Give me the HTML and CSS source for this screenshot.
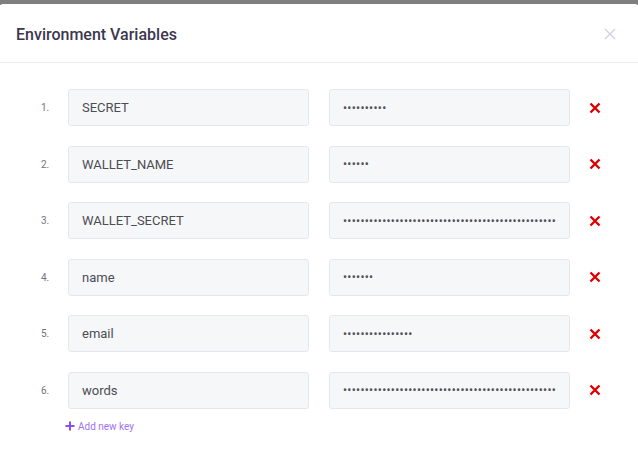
FILE: index.html
```html
<!DOCTYPE html>
<html>
<head>
<meta charset="utf-8">
<link rel="stylesheet" href="styles.css">
</head>
<body>
<div class="backdrop"></div>
<div class="modal">
  <div class="modal-header">
    <h1 class="title">Environment Variables</h1>
    <button class="close" aria-label="Close">
      <svg width="12" height="12" viewBox="0 0 12 12"><path d="M1 1L11 11M11 1L1 11" stroke="#d3d0e4" stroke-width="1.4" fill="none"/></svg>
    </button>
  </div>
  <div class="modal-body">
    <div class="rows">
      <div class="row"><span class="num">1.</span><input class="field" type="text" value="SECRET"><input class="field secret" type="password" value="aaaaaaaaaa"><button class="del"><svg width="12" height="12" viewBox="0 0 12 12"><path d="M1.5 1.5L10.5 10.5M10.5 1.5L1.5 10.5" stroke="#e00000" stroke-width="2.4" fill="none"/></svg></button></div>
      <div class="row"><span class="num">2.</span><input class="field" type="text" value="WALLET_NAME"><input class="field secret" type="password" value="aaaaaa"><button class="del"><svg width="12" height="12" viewBox="0 0 12 12"><path d="M1.5 1.5L10.5 10.5M10.5 1.5L1.5 10.5" stroke="#e00000" stroke-width="2.4" fill="none"/></svg></button></div>
      <div class="row"><span class="num">3.</span><input class="field" type="text" value="WALLET_SECRET"><input class="field secret" type="password" value="aaaaaaaaaaaaaaaaaaaaaaaaaaaaaaaaaaaaaaaaaaaaaaaaaaaaaaaaaaaaaaaaaaaa"><button class="del"><svg width="12" height="12" viewBox="0 0 12 12"><path d="M1.5 1.5L10.5 10.5M10.5 1.5L1.5 10.5" stroke="#e00000" stroke-width="2.4" fill="none"/></svg></button></div>
      <div class="row"><span class="num">4.</span><input class="field" type="text" value="name"><input class="field secret" type="password" value="aaaaaaa"><button class="del"><svg width="12" height="12" viewBox="0 0 12 12"><path d="M1.5 1.5L10.5 10.5M10.5 1.5L1.5 10.5" stroke="#e00000" stroke-width="2.4" fill="none"/></svg></button></div>
      <div class="row"><span class="num">5.</span><input class="field" type="text" value="email"><input class="field secret" type="password" value="aaaaaaaaaaaaaaaa"><button class="del"><svg width="12" height="12" viewBox="0 0 12 12"><path d="M1.5 1.5L10.5 10.5M10.5 1.5L1.5 10.5" stroke="#e00000" stroke-width="2.4" fill="none"/></svg></button></div>
      <div class="row"><span class="num">6.</span><input class="field" type="text" value="words"><input class="field secret" type="password" value="aaaaaaaaaaaaaaaaaaaaaaaaaaaaaaaaaaaaaaaaaaaaaaaaaaaaaaaaaaaaaaaaaaaaaaaa"><button class="del"><svg width="12" height="12" viewBox="0 0 12 12"><path d="M1.5 1.5L10.5 10.5M10.5 1.5L1.5 10.5" stroke="#e00000" stroke-width="2.4" fill="none"/></svg></button></div>
    </div>
    <a class="add" href="#"><svg width="10" height="10" viewBox="0 0 10 10"><path d="M5 0.5V9.5M0.5 5H9.5" stroke="#8a4ff0" stroke-width="2" fill="none"/></svg><span>Add new key</span></a>
  </div>
</div>
</body>
</html>
```
FILE: styles.css
```css
* { box-sizing: border-box; }
html, body {
  margin: 0;
  padding: 0;
  background: #ffffff;
  font-family: Roboto, "Liberation Sans", sans-serif;
  height: 475px;
  overflow: hidden;
}
.backdrop {
  height: 5px;
  background: #7f7f7f;
}
.modal {
  background: #fff;
  border-radius: 3px 3px 0 0;
  margin-top: -1px;
  height: 471px;
}
.modal-header {
  display: flex;
  align-items: center;
  justify-content: space-between;
  height: 59px;
  padding: 2px 22px 0 16px;
  border-bottom: 1px solid #ebe9f3;
}
.title {
  margin: 0;
  font-size: 16px;
  font-weight: 500;
  color: #3b3750;
  letter-spacing: 0;
}
.close {
  border: 0;
  background: none;
  padding: 0;
  width: 12px;
  height: 12px;
  display: flex;
}
.modal-body {
  padding: 26px 0 0 0;
}
.rows {
  display: flex;
  flex-direction: column;
  gap: 19.6px;
}
.row {
  display: flex;
  align-items: center;
  height: 37px;
}
.num {
  width: 68px;
  padding-left: 41px;
  font-size: 10px;
  color: #74737c;
}
.field {
  width: 241px;
  height: 37px;
  border: 1px solid #e6e6ee;
  border-radius: 3px;
  background: #f6f7f9;
  padding: 0 13px;
  font-family: Roboto, "Liberation Sans", sans-serif;
  font-size: 13px;
  color: #4c4c55;
  outline: none;
}
.field + .field {
  margin-left: 20px;
}
.secret {
  font-size: 12px;
  letter-spacing: 0.3px;
  color: #50505a;
}
.del {
  border: 0;
  background: none;
  padding: 0;
  margin-left: 19px;
  width: 12px;
  height: 12px;
  display: flex;
}
.add {
  display: inline-flex;
  align-items: center;
  gap: 3px;
  margin: 12px 0 0 65px;
  font-size: 10px;
  color: #a072f2;
  text-decoration: none;
}
```
